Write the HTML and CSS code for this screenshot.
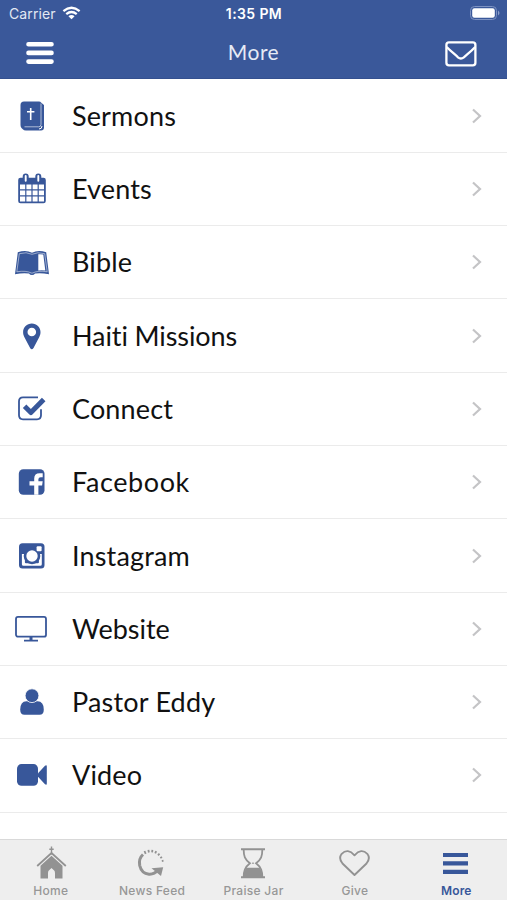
FILE: index.html
```html
<!DOCTYPE html>
<html lang="en">
<head>
<meta charset="utf-8">
<title>More</title>
<link rel="stylesheet" href="styles.css">
</head>
<body>
<div class="screen">
  <header class="header">
    <div class="status">
      <div class="carrier">Carrier
        <svg class="wifi" viewBox="0 0 20 15"><g fill="none" stroke="#fff" stroke-width="2.5"><path d="M1.3 5.4Q10-1.6 18.7 5.4M4.4 8.700Q10 4.300 15.600 8.700"/></g><path d="M6.700 10.900Q10 8.600 13.300 10.900L10 14.300z" fill="#fff"/></svg>
      </div>
      <div class="time">1:35 PM</div>
      <svg class="battery" viewBox="0 0 32 16"><rect x="1.500" y="1.500" width="26" height="13" rx="4" fill="none" stroke="#7d92c2"/><rect x="3.200" y="3.200" width="22.600" height="9.600" rx="2.200" fill="#fff"/><path d="M29 5.500q3 2.500 0 5z" fill="#8da0cb"/></svg>
    </div>
    <div class="nav">
      <svg class="menu" viewBox="0 0 28 24"><path d="M2.500 3.200h23M2.500 11.900h23M2.500 20.600h23" stroke="#fff" stroke-width="4.600" stroke-linecap="round"/></svg>
      <h1 class="title">More</h1>
      <svg class="mail" viewBox="0 0 32 26"><g fill="none" stroke="#fff" stroke-width="2.300" stroke-linejoin="round"><rect x="1.400" y="1.400" width="29" height="23" rx="2.600"/><path d="M1.700 6C6 10.500 9.500 13 13 16.300q2.900 2.300 5.800 0C22.500 13 26 10.500 30.200 6"/></g></svg>
    </div>
  </header>
  <main class="list">
    <a class="row"><svg class="icon" viewBox="0 0 40 40"><path d="M12 5.500h15q1.500 0 2 1l3 2.500v22.500q0 3-3 3H14q-2 0-3.500-1.500l-1-1Q8.500 31 8.500 29V9q0-3.500 3.500-3.500z"/><path d="M29 7.500v21q0 2.300-2.300 2.300H12.500" class="cut thin"/><path d="M27 33q3 0 3-3" class="cut"/><path d="M18.700 12v12M15 15.800h7.400" class="cut cross"/></svg><span class="label s-sermons">Sermons</span><svg class="chevron" viewBox="0 0 12 18"><path d="M2 2.500l7 6.500-7 6.500"/></svg></a>
    <a class="row"><svg class="icon" viewBox="0 0 40 40"><rect x="6.200" y="8.800" width="27.600" height="25.500" rx="2.300"/><path class="white" d="M8 15.500h5.200v4.700H8zM14.400 15.500h5v4.700h-5zM20.600 15.500h5v4.700h-5zM26.800 15.500H32v4.700h-5.200zM8 21.400h5.200v4.900H8zM14.400 21.400h5v4.900h-5zM20.600 21.400h5v4.900h-5zM26.800 21.400H32v4.900h-5.200zM8 27.500h5.200v5H8zM14.400 27.500h5v5h-5zM20.600 27.500h5v5h-5zM26.800 27.500H32v5h-5.200z"/><rect x="11.400" y="5.300" width="4.600" height="8.200" rx="2.300" stroke="#38579a" stroke-width="1.400"/><rect x="24" y="5.300" width="4.600" height="8.200" rx="2.300" stroke="#38579a" stroke-width="1.400"/><path d="M13.700 7v4.700M26.300 7v4.700" class="cut" stroke-width="1.900" stroke-linecap="round"/></svg><span class="label s-events">Events</span><svg class="chevron" viewBox="0 0 12 18"><path d="M2 2.500l7 6.500-7 6.500"/></svg></a>
    <a class="row"><svg class="icon" viewBox="0 0 40 40"><path d="M5.800 10.200Q14 7.500 20 10.700q6-3.200 14.200-.5L37 32.300q-8-1.800-14-.8-1 1.500-3 1.500t-3-1.500q-6-1-14 .8z"/><path class="cut" stroke-width=".5" d="M7.300 11.700Q14.500 9.500 20 12.300q5.500-2.800 12.700-.6l2.500 18.100q-9-1.600-15.200 1.400-6.200-3-15.200-1.400z"/><path class="white" d="M26.300 12.300q2.700-.3 5 .3l2 15.800q-3.400-.5-7 0z"/></svg><span class="label s-bible">Bible</span><svg class="chevron" viewBox="0 0 12 18"><path d="M2 2.500l7 6.500-7 6.500"/></svg></a>
    <a class="row"><svg class="icon" viewBox="0 0 40 40"><path fill-rule="evenodd" d="M19.800 7.500c4.900 0 8.700 3.700 8.700 8.500 0 2-.5 3.400-1.200 4.900L21.500 32q-1.700 2.400-3.400 0l-5.800-11.100c-.7-1.500-1.200-2.900-1.200-4.900 0-4.800 3.800-8.500 8.700-8.500zm0 4.200a4.300 4.300 0 100 8.600 4.300 4.300 0 000-8.600z"/></svg><span class="label s-haiti">Haiti Missions</span><svg class="chevron" viewBox="0 0 12 18"><path d="M2 2.500l7 6.500-7 6.500"/></svg></a>
    <a class="row"><svg class="icon" viewBox="0 0 40 40"><path d="M26 8.300H11q-4 0-4 4v14q0 4 4 4h14q4 0 4-4v-6" fill="none" stroke="#38579a" stroke-width="1.800"/><path d="M12.600 17.300l6.300 6.200L31.700 10.500" fill="none" stroke="#38579a" stroke-width="5" stroke-linejoin="round"/></svg><span class="label s-connect">Connect</span><svg class="chevron" viewBox="0 0 12 18"><path d="M2 2.500l7 6.500-7 6.500"/></svg></a>
    <a class="row"><svg class="icon" viewBox="0 0 40 40"><rect x="6.800" y="7.200" width="25.700" height="25.600" rx="4.500"/><path class="white" d="M22.200 32.800V23.400H17.500v-4.100h4.700v-2.800q0-5.300 5.500-5.300h3v4h-2q-2.300 0-2.300 2.100v2h4.300l-.6 4.100h-3.700v9.400z"/></svg><span class="label s-facebook">Facebook</span><svg class="chevron" viewBox="0 0 12 18"><path d="M2 2.500l7 6.500-7 6.500"/></svg></a>
    <a class="row"><svg class="icon" viewBox="0 0 40 40"><rect x="7" y="7.300" width="25.500" height="25.300" rx="3.500"/><path class="white" d="M9.900 18h3v8.200q0 1 1 1h12q1 0 1-1V18h2.900v10.200q0 1.600-1.600 1.600H11.500q-1.600 0-1.600-1.600z"/><circle cx="20" cy="20" r="8.300"/><circle class="white" cx="20" cy="20" r="5.700"/><rect class="white" x="24.600" y="10.200" width="5" height="5" rx="1"/></svg><span class="label s-instagram">Instagram</span><svg class="chevron" viewBox="0 0 12 18"><path d="M2 2.500l7 6.500-7 6.500"/></svg></a>
    <a class="row"><svg class="icon" viewBox="0 0 40 40"><rect x="4" y="7.900" width="30" height="19.800" rx="2" fill="none" stroke="#38579a" stroke-width="1.800"/><path d="M17.500 28h3v2.700H26v1.800H12v-1.800h5.500z"/></svg><span class="label s-website">Website</span><svg class="chevron" viewBox="0 0 12 18"><path d="M2 2.500l7 6.500-7 6.500"/></svg></a>
    <a class="row"><svg class="icon" viewBox="0 0 40 40"><path d="M14.500 19.300q-6.300 0-6.300 8.500 0 5 4.300 5h15q4.300 0 4.300-5 0-8.500-6.300-8.500z"/><circle cx="20" cy="13.700" r="6.900" stroke="#fff" stroke-width=".8"/></svg><span class="label s-pastor">Pastor Eddy</span><svg class="chevron" viewBox="0 0 12 18"><path d="M2 2.500l7 6.500-7 6.500"/></svg></a>
    <a class="row"><svg class="icon" viewBox="0 0 40 40"><rect x="5" y="9.100" width="21" height="21.600" rx="4.500"/><path d="M26 18.300l7-7.600q1.800-1.200 1.800.8v17q0 2-1.800.8l-7-7.600z"/></svg><span class="label s-video">Video</span><svg class="chevron" viewBox="0 0 12 18"><path d="M2 2.500l7 6.500-7 6.500"/></svg></a>
  </main>
  <nav class="tabs">
    <a class="tab"><svg class="tab-icon" viewBox="0 0 36 36"><path d="M18.500 1.500v8M16.300 4.300h4.400" stroke="#929292" stroke-width="1.400"/><path d="M4.200 21L18.500 8l14.300 13" fill="none" stroke="#929292" stroke-width="1.800"/><path d="M18.500 10.800l11 10v12.700H22V28q0-2.500-3.500-5-3.500 2.500-3.500 5v5.500H7.500V20.800z"/></svg><span>Home</span></a>
    <a class="tab"><svg class="tab-icon" viewBox="0 0 36 36"><path d="M9 9.500Q4.500 13.500 5.700 20.500q1.800 8 9.300 8.700 5.500.3 8.800-4" fill="none" stroke="#929292" stroke-width="3"/><path d="M17.500 23.200l11.700-.9-2.200 8.700z"/><path d="M10.500 6l1.200 2.800M14.400 4.800l.5 2.700M18.400 4.900l-.3 2.500M22.200 6.200l-1 2.100M25.500 8.700l-1.500 1.600M28 12l-1.700 1M29.500 15.700l-1.700.4" stroke="#929292" stroke-width="1.800"/></svg><span>News Feed</span></a>
    <a class="tab"><svg class="tab-icon" viewBox="0 0 36 36"><path d="M6 4.200h24M6 32.200h24" stroke="#929292" stroke-width="2"/><path d="M8.700 5c0 6 1 9 6.200 13.300C9.700 22.500 8.700 26 8.700 32M27.300 5c0 6-1 9-6.200 13.300 5.200 4.200 6.200 7.700 6.200 13.700" fill="none" stroke="#929292" stroke-width="1.800"/><path d="M8.700 32q.2-6 2.700-9.200h13.200q2.500 3.200 2.700 9.200z"/><path d="M17.300 17.500h1.400v1.400h-1.400z"/></svg><span>Praise Jar</span></a>
    <a class="tab"><svg class="tab-icon" viewBox="0 0 36 36"><path d="M17.500 30L5.500 18.500q-4.300-5-.8-9.700 6-6 12.800 1.500Q24.300 2.800 30.300 8.800q3.500 4.700-.8 9.700z" fill="none" stroke="#929292" stroke-width="1.900" stroke-linejoin="round"/></svg><span>Give</span></a>
    <a class="tab active"><svg class="tab-icon" viewBox="0 0 36 36"><path d="M5 10h25M5 18.400h25M5 26.800h25" stroke="#38579a" stroke-width="4.200"/></svg><span>More</span></a>
  </nav>
</div>
</body>
</html>
```
FILE: styles.css
```css
* { box-sizing: border-box; }
body { margin: 0; background: #fff; }
.screen { width: 507px; height: 900px; display: flex; flex-direction: column; overflow: hidden; }
.header { height: 79px; flex: none; background: #3a589a; color: #fff; border-bottom: 1px solid #34508f; }
.status { height: 27px; display: grid; grid-template-columns: 1fr auto 1fr; align-items: center; padding: 0 6px 0 9px; font: 14px/27px Inter, sans-serif; }
.carrier { display: flex; align-items: center; gap: 6px; color: #e3e8f3; letter-spacing: .1px; }
.wifi { width: 19px; height: 14px; margin-top: -1px; }
.time { font-weight: 600; font-size: 14px; letter-spacing: .4px; margin-left: -2px; }
.battery { width: 32px; height: 16px; justify-self: end; margin-top: -1px; }
.nav { height: 51px; display: grid; grid-template-columns: 1fr auto 1fr; align-items: center; padding: 0 30px 0 26px; }
.menu { width: 28px; height: 24px; }
.title { margin: -1px 0 0 4px; font: 400 21px/50px Lato, sans-serif; letter-spacing: .5px; color: #e6ebf5; }
.mail { width: 32px; height: 26px; justify-self: end; margin-top: 2px; }
.list { flex: 1; min-height: 0; padding-top: .6px; }
.row { height: 73.3px; display: flex; align-items: center; padding: 0 24px 0 12px; border-bottom: 1.5px solid #ebebeb; }
.icon { width: 40px; height: 40px; flex: none; fill: #38579a; }
.white { fill: #fff; }
.cut { fill: none; stroke: #fff; }
.thin { stroke-width: .6px; }
.cross { stroke-width: 1.6px; }
.label { flex: 1; margin-left: 20px; font: 400 27px/40px Lato, sans-serif; letter-spacing: .15px; color: #111; white-space: nowrap; }
.s-haiti { letter-spacing: -.1px; }
.s-facebook { letter-spacing: .6px; }
.s-website { letter-spacing: 0; }
.s-pastor { letter-spacing: .2px; }
.chevron { width: 12px; height: 18px; fill: none; stroke: #c4c4c6; stroke-width: 2.2px; }
.tabs { height: 61px; flex: none; display: grid; grid-template-columns: repeat(5, 1fr); background: #eee; border-top: 1.5px solid #d9d9d9; }
.tab { display: flex; flex-direction: column; align-items: center; padding-top: 5px; font: 500 12px/20px Inter, sans-serif; letter-spacing: .3px; color: #979797; }
.tab-icon { width: 36px; height: 36px; fill: #929292; }
.active { color: #38579a; font-weight: 600; letter-spacing: .1px; }
```
